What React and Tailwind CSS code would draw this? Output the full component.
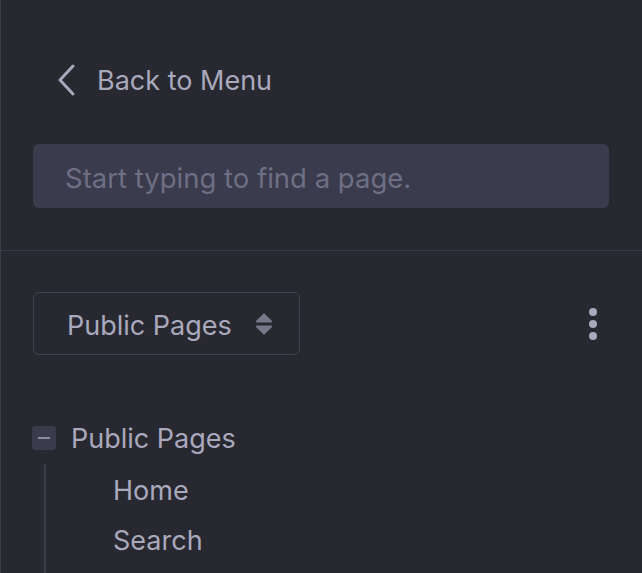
import React from "react";

const Chevron = () => (
  <svg width="22" height="34" viewBox="0 0 22 34" fill="none">
    <path d="M18 3 L5 17 L18 31" stroke="#a9a9bd" strokeWidth="3" strokeLinecap="round" strokeLinejoin="round" />
  </svg>
);

const UpDown = () => (
  <svg width="18" height="24" viewBox="0 0 18 24">
    <path d="M9 1 L17 9 Q17.5 10.5 16 10.5 L2 10.5 Q0.5 10.5 1 9 Z" fill="#777789" />
    <path d="M9 23 L17 15 Q17.5 13.5 16 13.5 L2 13.5 Q0.5 13.5 1 15 Z" fill="#777789" />
  </svg>
);

export default function App() {
  return (
    <div
      className="w-[642px] h-[573px] overflow-hidden bg-[#282830] border-l border-[#3d3d4a] text-[#a9a9bd]"
      style={{ fontFamily: "Inter, 'Liberation Sans', sans-serif" }}
    >
      {/* header */}
      <div className="px-[32px] pt-[60px] pb-[42px] border-b border-[#3a3a48]">
        <div className="flex items-center h-[40px] pl-[22px] gap-[20px]">
          <Chevron />
          <span className="text-[27px] leading-none">Back to Menu</span>
        </div>
        <input
          className="mt-[44px] w-[576px] h-[64px] rounded-[6px] bg-[#3a3b4c] px-[32px] pt-[4px] text-[27.5px] text-[#a9a9bd] placeholder:text-[#6e6f84] outline-none"
          placeholder="Start typing to find a page."
        />
      </div>

      {/* select row */}
      <div className="flex items-center justify-between pl-[32px] pr-[45px] pt-[41px]">
        <div className="flex items-center w-[267px] h-[63px] border border-[#41424f] rounded-[6px] pl-[33px] pr-[26px] justify-between">
          <span className="text-[27px] leading-none pt-[4px]">Public Pages</span>
          <UpDown />
        </div>
        <div className="flex flex-col gap-[4px]">
          <span className="w-[8px] h-[8px] rounded-full bg-[#a9a9bd]" />
          <span className="w-[8px] h-[8px] rounded-full bg-[#a9a9bd]" />
          <span className="w-[8px] h-[8px] rounded-full bg-[#a9a9bd]" />
        </div>
      </div>

      {/* tree */}
      <div className="pl-[31px] mt-[58px]">
        <div className="flex items-center h-[50px] gap-[15px]">
          <div className="w-[24px] h-[24px] rounded-[3px] bg-[#3a3b4c] flex items-center justify-center">
            <span className="w-[12px] h-[2px] bg-[#8a8b9d]" />
          </div>
          <span className="text-[27px] leading-none">Public Pages</span>
        </div>
        <div className="ml-[12px] border-l-2 border-[#3a3b4c] pl-[67px] mt-[1px] pt-[2px]">
          <div className="h-[50px] flex items-center text-[27px]">Home</div>
          <div className="h-[50px] flex items-center text-[27px]">Search</div>
          <div className="h-[20px]" />
        </div>
      </div>
    </div>
  );
}
